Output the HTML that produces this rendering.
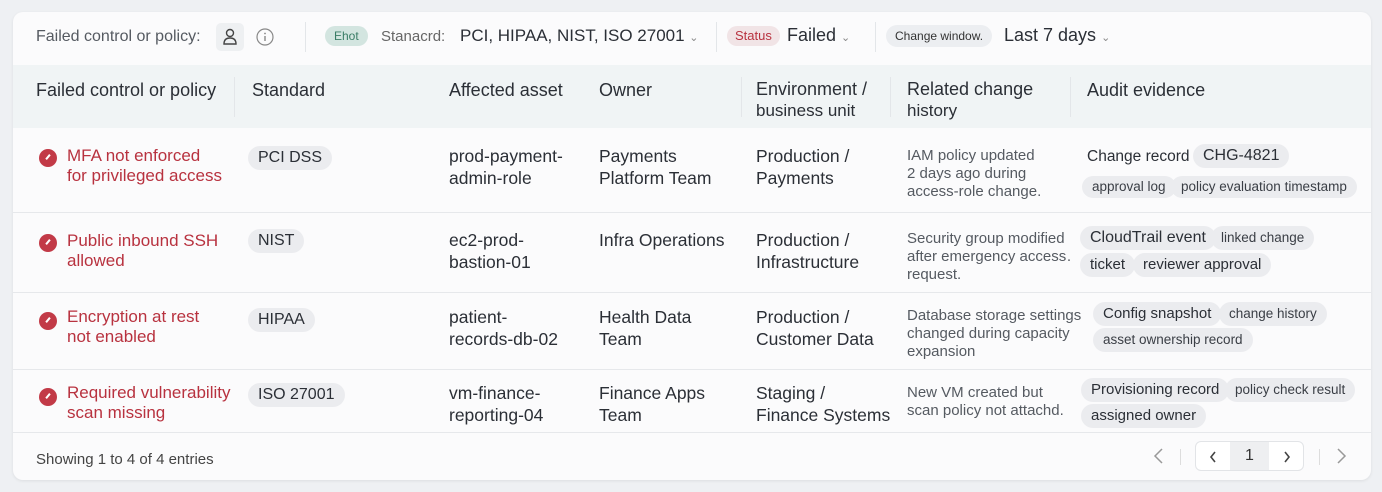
<!DOCTYPE html>
<html><head><meta charset="utf-8"><style>
*{box-sizing:border-box;margin:0;padding:0}
body{width:1382px;height:492px;background:#eef0f3;font-family:"Liberation Sans",sans-serif;position:relative;overflow:hidden;color:#2b2f36}
.card{position:absolute;left:13px;top:12px;width:1358px;height:468px;background:#fbfbfc;border-radius:10px;box-shadow:0 1px 3px rgba(0,0,0,.08);overflow:hidden}
.a{position:absolute;white-space:nowrap}
.hdr{position:absolute;left:0;top:53px;width:1358px;height:63px;background:#f0f4f5}
.hl{position:absolute;width:1px;background:#e3e6e9}
.row{position:absolute;left:0;width:1358px;height:1px;background:#e6e8eb}
.t{font-size:17.5px;line-height:22px;color:#2b2f36}
.r{font-size:17px;line-height:20px;color:#b8323f}
.s{font-size:15px;line-height:18px;color:#555a61}
.pill{position:absolute;background:#ebecef;border-radius:12px;font-size:16px;line-height:24px;padding:0 10px;color:#2b2f36;white-space:nowrap}
.sm{font-size:13.5px;color:#3a3e45}
.ic{position:absolute;width:18px;height:18px;border-radius:50%;background:#c23a47}
.ic:after{content:"";position:absolute;left:8px;top:5px;width:2px;height:6px;background:#fff;transform:rotate(40deg)}
</style></head><body>
<div class="card">
<div class="a" style="left:23px;top:16px;font-size:16px;color:#555a61">Failed control or policy:</div>
<div class="a" style="left:203px;top:11px;width:28px;height:28px;background:#eef0f2;border-radius:5px"></div>
<svg class="a" style="left:208px;top:15px" width="18" height="20" viewBox="0 0 18 20"><circle cx="9" cy="6" r="3.5" fill="none" stroke="#444" stroke-width="1.4"/><path d="M3 17 Q3 11 9 11 Q15 11 15 17 Z" fill="none" stroke="#444" stroke-width="1.4"/></svg>
<svg class="a" style="left:243px;top:16px" width="18" height="18"><circle cx="9" cy="9" r="8" fill="none" stroke="#888" stroke-width="1.2"/><rect x="8.3" y="8" width="1.4" height="5" fill="#888"/><circle cx="9" cy="5.5" r=".9" fill="#888"/></svg>
<div class="hl" style="left:292px;top:10px;height:30px"></div>
<div class="a" style="left:312px;top:14px;background:#d3e5e0;border-radius:11px;padding:0 9px;font-size:12px;line-height:20px;color:#3a7d66">Ehot</div>
<div class="a" style="left:368px;top:16px;font-size:15px;color:#666">Stanacrd:</div>
<div class="a" style="left:447px;top:14px;font-size:17px">PCI, HIPAA, NIST, ISO 27001 <span style="font-size:11px;color:#888">&#8964;</span></div>
<div class="hl" style="left:703px;top:10px;height:30px"></div>
<div class="a" style="left:714px;top:14px;background:#f1e4e6;border-radius:10px;padding:0 8px;font-size:13px;line-height:20px;color:#b8323f">Status</div>
<div class="a" style="left:774px;top:13px;font-size:18px">Failed <span style="font-size:11px;color:#888">&#8964;</span></div>
<div class="hl" style="left:862px;top:10px;height:30px"></div>
<div class="a" style="left:873px;top:13px;background:#eceef1;border-radius:11px;padding:0 9px;font-size:12px;line-height:22px;color:#333">Change window.</div>
<div class="a" style="left:991px;top:13px;font-size:18px">Last 7 days <span style="font-size:11px;color:#888">&#8964;</span></div>

<div class="hdr"></div>
<div class="a t" style="left:23px;top:67px;font-size:18px">Failed control or policy</div>
<div class="hl" style="left:221px;top:65px;height:40px"></div>
<div class="a t" style="left:239px;top:67px;font-size:18px">Standard</div>
<div class="a t" style="left:436px;top:67px;font-size:18px">Affected asset</div>
<div class="a t" style="left:586px;top:67px;font-size:18px">Owner</div>
<div class="hl" style="left:728px;top:65px;height:40px"></div>
<div class="a t" style="left:743px;top:67px;font-size:18px;line-height:21px">Environment /<br><span style="font-size:17px">business unit</span></div>
<div class="hl" style="left:877px;top:65px;height:40px"></div>
<div class="a t" style="left:894px;top:67px;font-size:18px;line-height:21px">Related change<br><span style="font-size:17px">history</span></div>
<div class="hl" style="left:1057px;top:65px;height:40px"></div>
<div class="a t" style="left:1074px;top:67px;font-size:18px">Audit evidence</div>

<!-- row1 -->
<div class="ic" style="left:26px;top:137px"></div>
<div class="a r" style="left:54px;top:134px">MFA not enforced<br>for privileged access</div>
<div class="pill" style="left:235px;top:134px">PCI DSS</div>
<div class="a t" style="left:436px;top:133px">prod-payment-<br>admin-role</div>
<div class="a t" style="left:586px;top:133px">Payments<br>Platform Team</div>
<div class="a t" style="left:743px;top:133px">Production /<br>Payments</div>
<div class="a s" style="left:894px;top:135px">IAM policy updated<br>2 days ago during<br>access-role change.</div>
<div class="a t" style="left:1074px;top:134px;font-size:15.5px">Change record</div>
<div class="pill" style="left:1180px;top:132px;font-size:16px">CHG-4821</div>
<div class="pill sm" style="left:1069px;top:164px;line-height:22px">approval log</div>
<div class="pill sm" style="left:1158px;top:164px;line-height:22px">policy evaluation timestamp</div>
<div class="row" style="top:200px"></div>

<!-- row2 -->
<div class="ic" style="left:26px;top:222px"></div>
<div class="a r" style="left:54px;top:219px">Public inbound SSH<br>allowed</div>
<div class="pill" style="left:235px;top:217px">NIST</div>
<div class="a t" style="left:436px;top:217px">ec2-prod-<br>bastion-01</div>
<div class="a t" style="left:586px;top:217px">Infra Operations</div>
<div class="a t" style="left:743px;top:217px">Production /<br>Infrastructure</div>
<div class="a s" style="left:894px;top:218px;width:165px;overflow:hidden">Security group modified<br>after emergency access…<br>request.</div>
<div class="pill" style="left:1067px;top:214px">CloudTrail event</div>
<div class="pill sm" style="left:1198px;top:214px">linked change</div>
<div class="pill" style="left:1067px;top:241px;font-size:15px">ticket</div>
<div class="pill" style="left:1120px;top:241px;font-size:15px">reviewer approval</div>
<div class="row" style="top:280px"></div>

<!-- row3 -->
<div class="ic" style="left:26px;top:300px"></div>
<div class="a r" style="left:54px;top:295px">Encryption at rest<br>not enabled</div>
<div class="pill" style="left:235px;top:296px">HIPAA</div>
<div class="a t" style="left:436px;top:294px">patient-<br>records-db-02</div>
<div class="a t" style="left:586px;top:294px">Health Data<br>Team</div>
<div class="a t" style="left:743px;top:294px">Production /<br>Customer Data</div>
<div class="a s" style="left:894px;top:295px">Database storage settings<br>changed during capacity<br>expansion</div>
<div class="pill" style="left:1080px;top:290px;font-size:15px">Config snapshot</div>
<div class="pill sm" style="left:1206px;top:290px">change history</div>
<div class="pill sm" style="left:1080px;top:316px">asset ownership record</div>
<div class="row" style="top:357px"></div>

<!-- row4 -->
<div class="ic" style="left:26px;top:376px"></div>
<div class="a r" style="left:54px;top:371px">Required vulnerability<br>scan missing</div>
<div class="pill" style="left:235px;top:371px">ISO 27001</div>
<div class="a t" style="left:436px;top:370px">vm-finance-<br>reporting-04</div>
<div class="a t" style="left:586px;top:370px">Finance Apps<br>Team</div>
<div class="a t" style="left:743px;top:370px">Staging /<br>Finance Systems</div>
<div class="a s" style="left:894px;top:372px">New VM created but<br>scan policy not attachd.</div>
<div class="pill" style="left:1068px;top:366px;font-size:15px">Provisioning record</div>
<div class="pill sm" style="left:1212px;top:366px">policy check result</div>
<div class="pill" style="left:1068px;top:392px;font-size:15px">assigned owner</div>
<div class="row" style="top:420px"></div>

<!-- footer -->
<div class="a" style="left:23px;top:439px;font-size:15px;color:#444">Showing 1 to 4 of 4 entries</div>
<svg class="a" style="left:1139px;top:434px" width="14" height="20"><path d="M10 3 L3 10 L10 17" fill="none" stroke="#999" stroke-width="1.5"/></svg>
<div class="hl" style="left:1167px;top:437px;height:16px;background:#ddd"></div>
<div class="a" style="left:1182px;top:429px;width:109px;height:30px;border:1px solid #e2e4e7;border-radius:6px;background:#fff;overflow:hidden">
<div class="a" style="left:34px;top:0;width:39px;height:30px;background:#eeeff1;text-align:center;font-size:16px;line-height:28px;color:#333">1</div>
<svg class="a" style="left:12px;top:8px" width="10" height="14"><path d="M7 2 L3 7 L7 12" fill="none" stroke="#444" stroke-width="1.6"/></svg>
<svg class="a" style="left:86px;top:8px" width="10" height="14"><path d="M3 2 L7 7 L3 12" fill="none" stroke="#444" stroke-width="1.6"/></svg>
</div>
<div class="hl" style="left:1306px;top:437px;height:16px;background:#ddd"></div>
<svg class="a" style="left:1321px;top:434px" width="14" height="20"><path d="M4 3 L11 10 L4 17" fill="none" stroke="#999" stroke-width="1.5"/></svg>
</div>
</body></html>
